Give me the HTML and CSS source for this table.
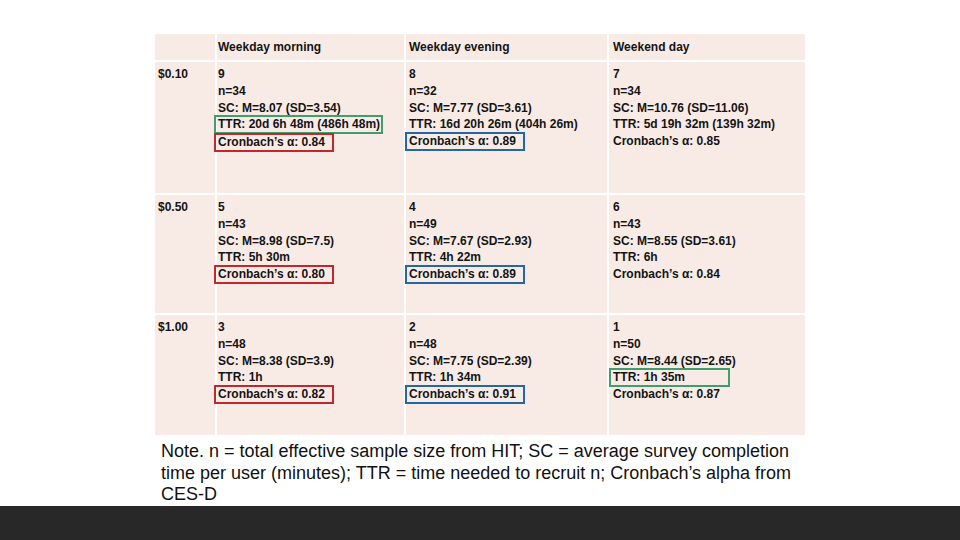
FILE: index.html
```html
<!DOCTYPE html>
<html>
<head>
<meta charset="utf-8">
<link rel="stylesheet" href="styles.css">
</head>
<body>
<div class="page">
  <div class="grid">
    <div class="cell c1 head"></div>
    <div class="cell c2 head">Weekday morning</div>
    <div class="cell c3 head">Weekday evening</div>
    <div class="cell c4 head">Weekend day</div>

    <div class="cell c1">$0.10</div>
    <div class="cell c2">
      <div>9</div><div>n=34</div><div>SC: M=8.07 (SD=3.54)</div>
      <div class="box green wide">TTR: 20d 6h 48m (486h 48m)</div>
      <div class="box red cron">Cronbach’s α: 0.84</div>
    </div>
    <div class="cell c3">
      <div>8</div><div>n=32</div><div>SC: M=7.77 (SD=3.61)</div>
      <div>TTR: 16d 20h 26m (404h 26m)</div>
      <div class="box blue cron">Cronbach’s α: 0.89</div>
    </div>
    <div class="cell c4">
      <div>7</div><div>n=34</div><div>SC: M=10.76 (SD=11.06)</div>
      <div>TTR: 5d 19h 32m (139h 32m)</div>
      <div>Cronbach’s α: 0.85</div>
    </div>

    <div class="cell c1">$0.50</div>
    <div class="cell c2">
      <div>5</div><div>n=43</div><div>SC: M=8.98 (SD=7.5)</div>
      <div>TTR: 5h 30m</div>
      <div class="box red cron">Cronbach’s α: 0.80</div>
    </div>
    <div class="cell c3">
      <div>4</div><div>n=49</div><div>SC: M=7.67 (SD=2.93)</div>
      <div>TTR: 4h 22m</div>
      <div class="box blue cron">Cronbach’s α: 0.89</div>
    </div>
    <div class="cell c4">
      <div>6</div><div>n=43</div><div>SC: M=8.55 (SD=3.61)</div>
      <div>TTR: 6h</div>
      <div>Cronbach’s α: 0.84</div>
    </div>

    <div class="cell c1">$1.00</div>
    <div class="cell c2">
      <div>3</div><div>n=48</div><div>SC: M=8.38 (SD=3.9)</div>
      <div>TTR: 1h</div>
      <div class="box red cron">Cronbach’s α: 0.82</div>
    </div>
    <div class="cell c3">
      <div>2</div><div>n=48</div><div>SC: M=7.75 (SD=2.39)</div>
      <div>TTR: 1h 34m</div>
      <div class="box blue cron">Cronbach’s α: 0.91</div>
    </div>
    <div class="cell c4">
      <div>1</div><div>n=50</div><div>SC: M=8.44 (SD=2.65)</div>
      <div class="box green short">TTR: 1h 35m</div>
      <div>Cronbach’s α: 0.87</div>
    </div>
  </div>
  <p class="note">Note. n = total effective sample size from HIT; SC = average survey completion time per user (minutes); TTR = time needed to recruit n; Cronbach’s alpha from CES-D</p>
  <div class="footer"></div>
</div>
</body>
</html>
```
FILE: styles.css
```css
html, body {
  margin: 0;
  padding: 0;
  background: #ffffff;
}
.page {
  width: 960px;
  height: 540px;
  display: flex;
  flex-direction: column;
  font-family: "Liberation Sans", Arial, sans-serif;
  color: #141414;
}
.grid {
  margin: 34px 0 0 155px;
  display: grid;
  grid-template-columns: 60px 187px 201px 196px;
  grid-template-rows: 26px 131px 118px 120px;
  gap: 2px;
  width: 650px;
}
.cell {
  background: #f8ebe6;
  font-size: 12px;
  font-weight: bold;
  line-height: 16.75px;
  padding: 4px 0 0 3px;
  box-sizing: border-box;
  white-space: nowrap;
}
.cell.head {
  display: flex;
  align-items: center;
  padding-top: 0;
}
.c1 { padding-left: 3px; }
.c2 { padding-left: 1px; }
.c3 { padding-left: 3px; }
.c4 { padding-left: 4px; }
.box {
  border: 2px solid;
  margin: -1px 0 -1px -4px;
  padding: 0 0 0 2px;
  box-sizing: border-box;
  height: 18.75px;
  line-height: 14.75px;
  position: relative;
}
.green { border-color: #3f9e6c; }
.red { border-color: #c3272c; }
.blue { border-color: #2567a3; }
.cron { width: 120px; }
.wide { width: 169px; }
.short { width: 121px; }
.note {
  margin: 6px 0 0 161px;
  width: 645px;
  font-size: 18px;
  line-height: 21.5px;
  color: #111;
}
.footer {
  margin-top: auto;
  height: 37px;
  background: #282828;
}
```
